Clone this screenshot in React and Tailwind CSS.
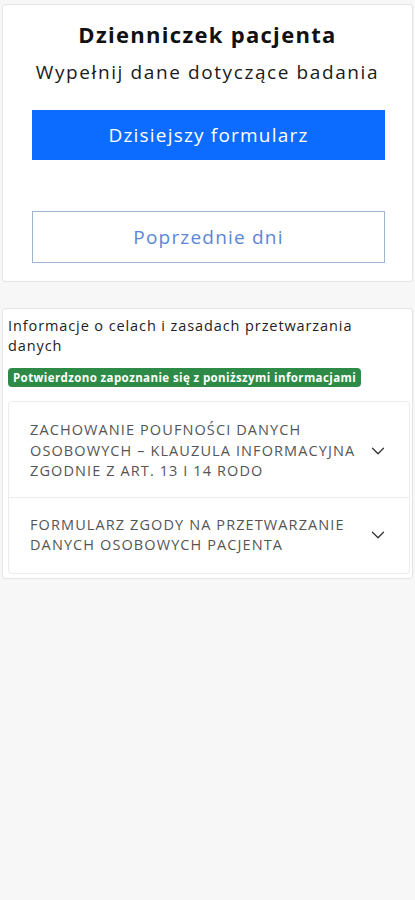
import React from "react";
import { ChevronDown } from "lucide-react";

const items = [
  "ZACHOWANIE POUFNOŚCI DANYCH OSOBOWYCH – KLAUZULA INFORMACYJNA ZGODNIE Z ART. 13 I 14 RODO",
  "FORMULARZ ZGODY NA PRZETWARZANIE DANYCH OSOBOWYCH PACJENTA",
];

export default function App() {
  return (
    <div
      className="min-h-[900px] bg-[#f7f7f7] px-[2px] pt-[4px]"
      style={{ fontFamily: '"Open Sans", "Noto Sans", sans-serif' }}
    >
      <div className="rounded-[3px] border border-[#e4e4e4] bg-white pt-[15px] pb-[18px]">
        <h1 className="text-center text-[22px] font-bold leading-[28px] tracking-[1.3px] text-[#111]">
          Dzienniczek pacjenta
        </h1>
        <p className="mt-[11px] text-center text-[19px] leading-[26px] tracking-[1.6px] text-[#1a1a1a]">
          Wypełnij dane dotyczące badania
        </p>
        <div className="mt-[25px] flex flex-col gap-[51px] pl-[29px] pr-[27px]">
          <button className="h-[50px] w-full bg-[#0b6cff] text-[19px] tracking-[1.2px] text-white">
            Dzisiejszy formularz
          </button>
          <button className="h-[52px] w-full border border-[#9db4d4] bg-white text-[19px] tracking-[1.2px] text-[#5b86d6]">
            Poprzednie dni
          </button>
        </div>
      </div>

      <div className="mt-[26px] rounded-[3px] border border-[#e4e4e4] bg-white pl-[5px] pr-[2px] pt-[7px] pb-[4px]">
        <p className="text-[14.5px] leading-[20px] tracking-[0.9px] text-[#222]">
          Informacje o celach i zasadach przetwarzania danych
        </p>
        <span className="mt-[12px] inline-block rounded-[4px] bg-[#2e8b47] px-[5px] text-[11.5px] font-bold leading-[19px] tracking-[0.4px] text-white">
          Potwierdzono zapoznanie się z poniższymi informacjami
        </span>
        <div className="mt-[13px] rounded-[4px] border border-[#ececec]">
          {items.map((t, i) => (
            <div
              key={i}
              className={
                "flex items-center gap-[8px] pl-[21px] pr-[20px] " +
                (i === 0 ? "pt-[18px] pb-[15px] border-b border-[#ececec]" : "pt-[17px] pb-[17px]")
              }
            >
              <span className="flex-1 text-[14.5px] leading-[20.5px] tracking-[1.1px] text-[#555]">{t}</span>
              <ChevronDown className="h-[22px] w-[22px] text-[#333]" strokeWidth={1.4} />
            </div>
          ))}
        </div>
      </div>
    </div>
  );
}
